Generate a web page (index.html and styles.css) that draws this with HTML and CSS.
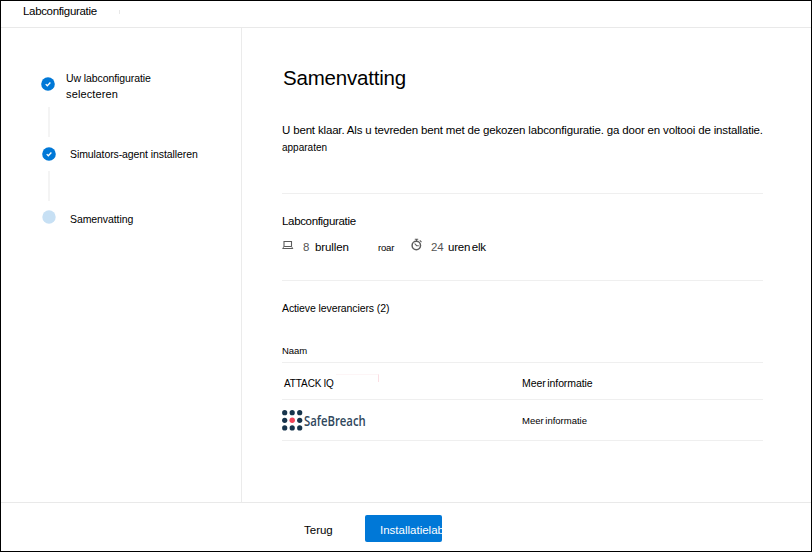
FILE: index.html
```html
<!DOCTYPE html>
<html lang="nl">
<head>
<meta charset="utf-8">
<title>Labconfiguratie</title>
<link rel="stylesheet" href="styles.css">
</head>
<body>
<div class="window">
  <header class="topbar"><span>Labconfiguratie</span><i class="tick"></i></header>
  <div class="body">
    <nav class="steps">
      <div class="step first">
        <svg class="dot" viewBox="0 0 14 14"><circle cx="7" cy="7" r="6.8" fill="#0078d7"/><path d="M4.7 7.1l1.6 1.6 3.1-3.2" fill="none" stroke="#fff" stroke-width="1.3"/></svg>
        <div class="label"><div>Uw labconfiguratie</div><div class="wide">selecteren</div></div>
      </div>
      <div class="line"></div>
      <div class="step second">
        <svg class="dot" viewBox="0 0 14 14"><circle cx="7" cy="7" r="6.8" fill="#0078d7"/><path d="M4.7 7.1l1.6 1.6 3.1-3.2" fill="none" stroke="#fff" stroke-width="1.3"/></svg>
        <div class="label">Simulators-agent installeren</div>
      </div>
      <div class="line short"></div>
      <div class="step third">
        <svg class="dot" viewBox="0 0 14 14"><circle cx="7" cy="7" r="6.7" fill="#c7e0f4"/></svg>
        <div class="label">Samenvatting</div>
      </div>
    </nav>
    <main class="content">
      <h1>Samenvatting</h1>
      <p class="intro">U bent klaar. Als u tevreden bent met de gekozen labconfiguratie. ga door en voltooi de installatie.</p>
      <p class="devices">apparaten</p>
      <section class="config">
        <h2>Labconfiguratie</h2>
        <div class="facts">
          <svg class="laptop" viewBox="0 0 12 10"><path d="M2 1.5h7.5v5H2zM.5 8.5h10.5" fill="none" stroke="#5c5c5c" stroke-width="1.1"/><path d="M2 6.5L.7 8.5M9.5 6.5l1.3 2" stroke="#777" fill="none"/></svg>
          <span class="num eight">8</span><span class="machines">brullen</span><span class="roar">roar</span>
          <svg class="timer" viewBox="0 0 12 13"><circle cx="5.3" cy="7.5" r="4.2" fill="none" stroke="#5c5c5c" stroke-width="1.5"/><path d="M3.8 1.3h3.4M5.5 1.3v2M8.8 2.4l1.7 1.7M3.6 5.5l2 2.2h2.2" fill="none" stroke="#5c5c5c" stroke-width="1.1"/></svg>
          <span class="num hours">24</span><span class="each">uren elk</span>
        </div>
      </section>
      <section class="vendors">
        <h2>Actieve leveranciers (2)</h2>
        <div class="row head"><span>Naam</span></div>
        <div class="row attack"><span class="name">ATTACK<b></b>IQ</span><i class="mark"></i><a>Meer informatie</a></div>
        <div class="row safe">
          <span class="brand">
            <svg viewBox="0 0 21 21"><g fill="#17344c"><circle cx="2.7" cy="2.7" r="2.6"/><circle cx="10.2" cy="2.7" r="2.6"/><circle cx="17.7" cy="2.7" r="2.6"/><circle cx="2.7" cy="10.3" r="2.6"/><circle cx="17.7" cy="10.3" r="2.6"/><circle cx="2.7" cy="17.9" r="2.6"/><circle cx="10.2" cy="17.9" r="2.6"/><circle cx="17.7" cy="17.9" r="2.6"/></g><circle cx="10.2" cy="10.3" r="2.7" fill="#f2465a"/></svg>
            <span class="wordmark">SafeBreach</span>
          </span>
          <a>Meer informatie</a>
        </div>
      </section>
    </main>
  </div>
  <footer class="footer"><span class="back">Terug</span><button class="primary">Installatielab</button></footer>
</div>
</body>
</html>
```
FILE: styles.css
```css
* { box-sizing: border-box; }
body { margin: 0; background: #fff; color: #000; font-family: "Liberation Sans", Arial, sans-serif; font-size: 10.5px; }
h1, h2, p { margin: 0; font-weight: normal; }
span, a, button { white-space: nowrap; }
svg { display: block; flex: none; }
.window { width: 812px; height: 552px; border: 1px solid #000; display: flex; flex-direction: column; overflow: hidden; }
.topbar { height: 27px; flex: none; border-bottom: 1px solid #e9e9e9; padding: 3px 0 0 22px; display: flex; font-size: 11.5px; line-height: 15px; letter-spacing: -.33px; }
.tick { width: 1px; height: 4px; margin: 6px 0 0 22px; background: #e8e8e8; }
.body { flex: 1; display: flex; min-height: 0; }
.steps { width: 241px; border-right: 1px solid #ebebeb; padding: 43px 0 0 40px; }
.step { display: flex; letter-spacing: -.09px; line-height: 15px; }
.dot { width: 14px; height: 14px; }
.first .dot { margin-top: 6px; }
.first .label { margin-left: 11px; }
.first .wide { font-size: 11px; letter-spacing: .13px; line-height: 16px; }
.line { width: 2px; height: 30px; margin: 5px 0 0 7px; background: #f4f4f4; }
.line.short { margin-top: 9px; }
.second { margin: 9px 0 0 1px; }
.second .dot { margin-top: 1px; }
.second .label, .third .label { margin-left: 14px; }
.second .label { padding-top: 1px; }
.third { margin: 9px 0 0 1px; }
.third .label { padding-top: 2px; }
.content { width: 521px; padding: 37px 0 0 40px; }
h1 { font-size: 20.5px; line-height: 26px; letter-spacing: -.2px; margin-left: 1px; }
.intro { margin-top: 31px; font-size: 11.5px; line-height: 16px; letter-spacing: -.165px; white-space: nowrap; }
.devices { margin-top: 3px; font-size: 10px; line-height: 13px; }
h2 { font-size: 11.5px; line-height: 15px; letter-spacing: -.33px; }
.config { margin-top: 39px; padding-top: 20px; height: 87px; border-top: 1px solid #efefef; }
.facts { display: flex; margin-top: 10px; height: 18px; line-height: 16px; font-size: 11.5px; }
.laptop { width: 12px; height: 10px; margin-top: 1px; }
.num { color: #555; }
.eight { margin-left: 9px; width: 12px; }
.machines { width: 63px; letter-spacing: -.1px; }
.roar { width: 33px; font-size: 9.5px; letter-spacing: -.2px; padding-top: 1px; }
.timer { width: 12px; height: 13px; margin-top: -1px; }
.hours { margin-left: 8px; width: 17px; letter-spacing: -.2px; }
.each { letter-spacing: -.2px; word-spacing: -1.5px; }
.vendors { border-top: 1px solid #efefef; padding-top: 20px; }
.vendors h2 { font-size: 10.5px; letter-spacing: -.1px; }
.row { display: flex; align-items: center; border-bottom: 1px solid #efefef; }
.row a { width: 240px; }
.head { height: 47px; padding-top: 23px; font-size: 9.5px; letter-spacing: -.1px; }
.attack { height: 37px; padding-top: 4px; }
.name { width: 52px; margin-left: 2px; font-size: 10px; letter-spacing: -.1px; }
.name b { display: inline-block; width: 2px; }
.mark { width: 43px; height: 8px; margin: -11px 143px 0 0; border-top: 1px solid #fdf5f6; border-right: 1px solid #fbdfe4; }
.attack a { letter-spacing: -.1px; word-spacing: -1px; }
.safe { height: 41px; padding-top: 1px; }
.brand { display: flex; align-items: center; width: 240px; }
.brand svg { width: 21px; height: 21px; margin-right: 1px; }
.wordmark { font: 600 14px/20px "Open Sans", sans-serif; color: #30475c; transform: scaleX(.81); transform-origin: 0 50%; }
.safe a { font-size: 9.5px; word-spacing: -1px; }
.footer { height: 49px; flex: none; border-top: 1px solid #e9e9e9; display: flex; align-items: flex-start; padding: 12px 0 0 303px; font-size: 11.5px; }
.back { width: 61px; line-height: 31px; }
.primary { width: 77px; height: 27px; border: 0; border-radius: 2px; background: #0078d7; color: #fff; padding: 3px 0 0 15px; text-align: left; overflow: hidden; font: 11.5px/24px "Liberation Sans", sans-serif; }
```
